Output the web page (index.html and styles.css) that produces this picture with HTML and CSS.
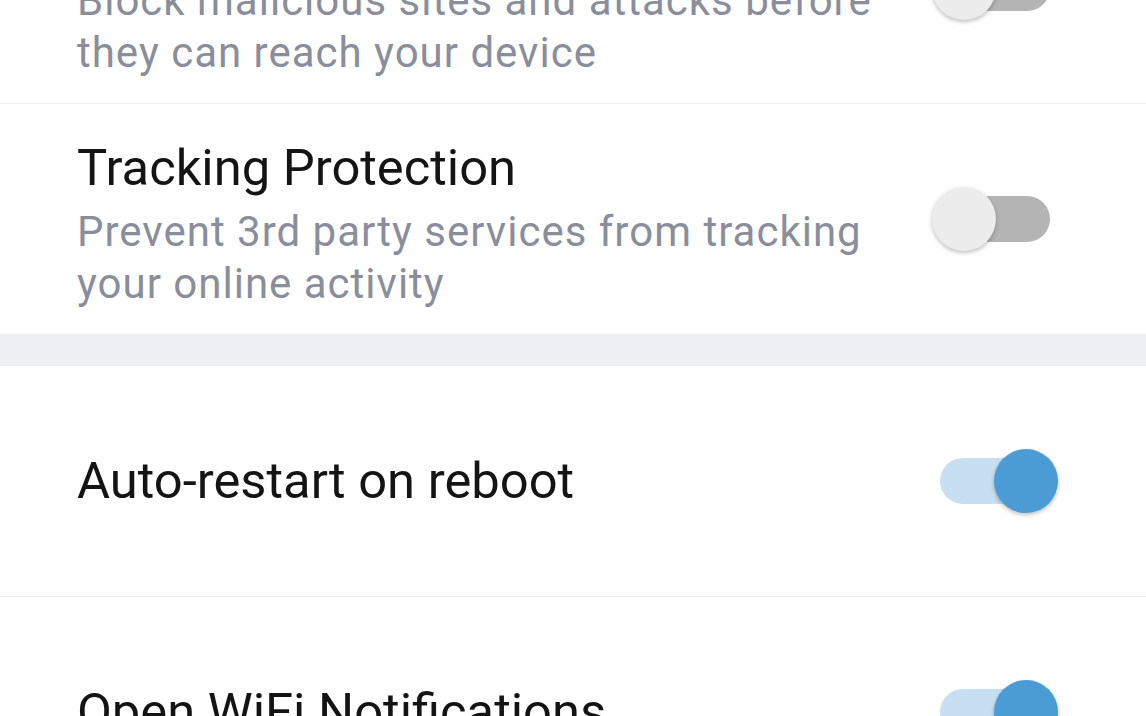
FILE: index.html
```html
<!DOCTYPE html>
<html lang="en">
<head>
<meta charset="utf-8">
<title>Settings</title>
<link rel="stylesheet" href="styles.css">
</head>
<body>
<div class="screen">
  <div class="group">
    <div class="row row-first">
      <div class="text text-two">
        <div class="title">Web Protection</div>
        <div class="subtitle">Block malicious sites and attacks before they can reach your device</div>
      </div>
      <div class="switch"><div class="track"></div><div class="knob"></div></div>
    </div>
    <div class="row">
      <div class="text text-two">
        <div class="title">Tracking Protection</div>
        <div class="subtitle">Prevent 3rd party services from tracking your online activity</div>
      </div>
      <div class="switch"><div class="track"></div><div class="knob"></div></div>
    </div>
  </div>
  <div class="band"></div>
  <div class="group">
    <div class="row">
      <div class="text">
        <div class="title">Auto-restart on reboot</div>
      </div>
      <div class="switch on"><div class="track"></div><div class="knob"></div></div>
    </div>
    <div class="row">
      <div class="text">
        <div class="title">Open WiFi Notifications</div>
      </div>
      <div class="switch on"><div class="track"></div><div class="knob"></div></div>
    </div>
  </div>
</div>
</body>
</html>
```
FILE: styles.css
```css
html, body {
  margin: 0;
  padding: 0;
  background: #ffffff;
  overflow: hidden;
}
.screen {
  width: 1146px;
  height: 716px;
  overflow: hidden;
  font-family: Roboto, "Noto Sans", sans-serif;
}
.group {
  display: flex;
  flex-direction: column;
}
.row {
  height: 230px;
  display: flex;
  align-items: center;
  padding: 0 88px 0 77px;
  border-bottom: 1px solid #eceef2;
}
.group .row:last-child {
  border-bottom: none;
}
.row-first {
  margin-top: -127px;
}
.text {
  flex: 1;
}
.text-two {
  margin-top: 10px;
}
.title {
  font-size: 50.7px;
  line-height: 60px;
  color: #141414;
}
.subtitle {
  margin-top: 8px;
  font-size: 42px;
  letter-spacing: 1px;
  line-height: 52px;
  color: #8a8e9b;
  max-width: 820px;
}
.band {
  height: 32px;
  background: #edf0f5;
}
.switch {
  position: relative;
  width: 126px;
  height: 64px;
  flex: none;
}
.track {
  position: absolute;
  left: 8px;
  right: 8px;
  top: 9px;
  height: 46px;
  border-radius: 23px;
  background: #b4b4b4;
}
.knob {
  position: absolute;
  left: 0;
  top: 0;
  width: 64px;
  height: 64px;
  border-radius: 50%;
  background: #ececec;
  box-shadow: 0 2px 4px rgba(0, 0, 0, 0.25);
}
.switch.on .track {
  background: #c6dff1;
}
.switch.on .knob {
  left: auto;
  right: 0;
  background: #4b9bd5;
}
```
